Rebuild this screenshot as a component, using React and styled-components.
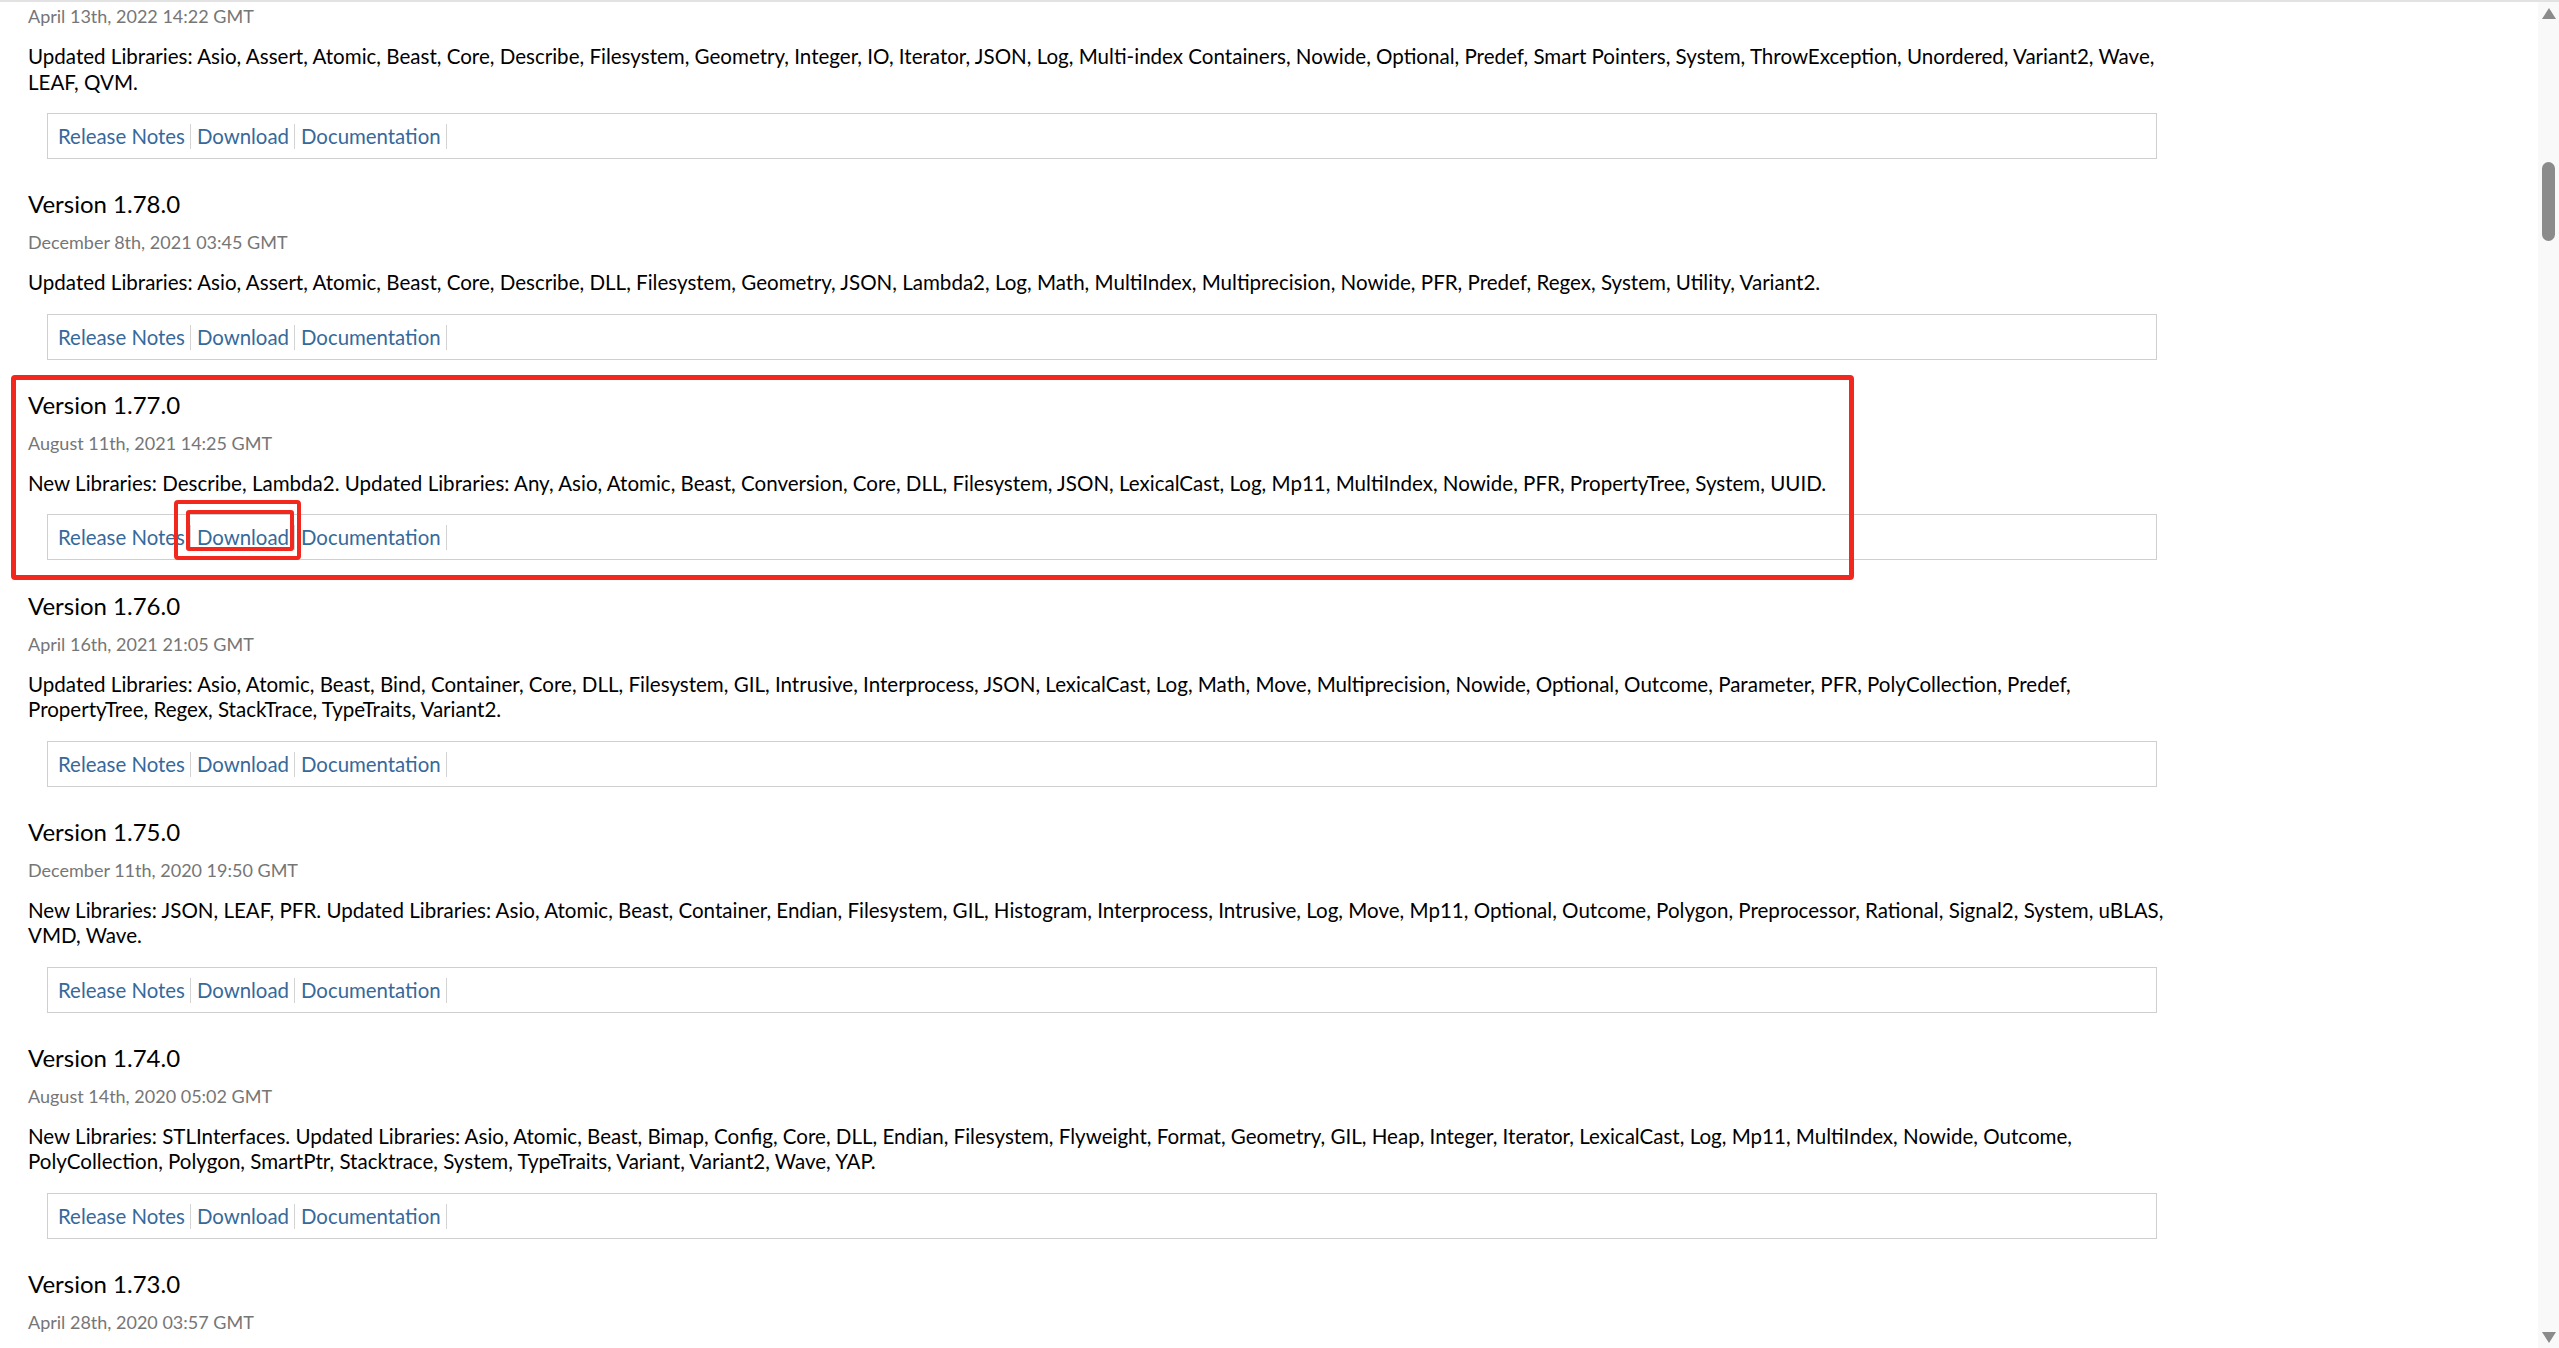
import React from "react"
import styled, { createGlobalStyle, css } from "styled-components"

const GlobalStyle = createGlobalStyle`
html, body {
	margin:0;
	padding:0;
	background:#fff;
	overflow:hidden;
}
body {
	font-family: Lato, "Noto Sans", "Liberation Sans", sans-serif;
	color:#000;
}
`

const releases = [
	{
		version: "1.79.0",
		date: "April 13th, 2022 14:22 GMT",
		lines: [
			"Updated Libraries: Asio, Assert, Atomic, Beast, Core, Describe, Filesystem, Geometry, Integer, IO, Iterator, JSON, Log, Multi-index Containers, Nowide, Optional, Predef, Smart Pointers, System, ThrowException, Unordered, Variant2, Wave,",
			"LEAF, QVM.",
		],
		hideTitle: true,
	},
	{
		version: "1.78.0",
		date: "December 8th, 2021 03:45 GMT",
		lines: [
			"Updated Libraries: Asio, Assert, Atomic, Beast, Core, Describe, DLL, Filesystem, Geometry, JSON, Lambda2, Log, Math, MultiIndex, Multiprecision, Nowide, PFR, Predef, Regex, System, Utility, Variant2.",
		],
	},
	{
		version: "1.77.0",
		date: "August 11th, 2021 14:25 GMT",
		lines: [
			"New Libraries: Describe, Lambda2. Updated Libraries: Any, Asio, Atomic, Beast, Conversion, Core, DLL, Filesystem, JSON, LexicalCast, Log, Mp11, MultiIndex, Nowide, PFR, PropertyTree, System, UUID.",
		],
		marked: true,
	},
	{
		version: "1.76.0",
		date: "April 16th, 2021 21:05 GMT",
		lines: [
			"Updated Libraries: Asio, Atomic, Beast, Bind, Container, Core, DLL, Filesystem, GIL, Intrusive, Interprocess, JSON, LexicalCast, Log, Math, Move, Multiprecision, Nowide, Optional, Outcome, Parameter, PFR, PolyCollection, Predef,",
			"PropertyTree, Regex, StackTrace, TypeTraits, Variant2.",
		],
	},
	{
		version: "1.75.0",
		date: "December 11th, 2020 19:50 GMT",
		lines: [
			"New Libraries: JSON, LEAF, PFR. Updated Libraries: Asio, Atomic, Beast, Container, Endian, Filesystem, GIL, Histogram, Interprocess, Intrusive, Log, Move, Mp11, Optional, Outcome, Polygon, Preprocessor, Rational, Signal2, System, uBLAS,",
			"VMD, Wave.",
		],
	},
	{
		version: "1.74.0",
		date: "August 14th, 2020 05:02 GMT",
		lines: [
			"New Libraries: STLInterfaces. Updated Libraries: Asio, Atomic, Beast, Bimap, Config, Core, DLL, Endian, Filesystem, Flyweight, Format, Geometry, GIL, Heap, Integer, Iterator, LexicalCast, Log, Mp11, MultiIndex, Nowide, Outcome,",
			"PolyCollection, Polygon, SmartPtr, Stacktrace, System, TypeTraits, Variant, Variant2, Wave, YAP.",
		],
	},
	{
		// only the title and date are still inside the window
		version: "1.73.0",
		date: "April 28th, 2020 03:57 GMT",
		lines: [],
		noLinks: true,
	},
]

const Page = styled.div`
height:100vh;
display:flex;
flex-direction:column;
overflow:hidden;
`

const TopEdge = styled.div`
flex:none;
height:2px;
background:#e2e2e2;
`

const Viewport = styled.div`
flex:1;
min-height:0;
display:flex;
`

const Content = styled.main`
flex:1;
min-width:0;
overflow:hidden;
padding-left:28px;
`

// scrolled down: top of the first release is above the window
const ReleaseList = styled.div`
width:2136px;
margin-top:-8px;
`

const Release = styled.section`
position:relative;
padding-bottom:29.2px;
${props => props.$marked && css`
	&::after{
		content:"";
		position:absolute;
		left:-17px;
		top:-14px;
		width:1843px;
		height:205px;
		box-sizing:border-box;
		border:5px solid #f2281e;
		border-radius:4px;
		pointer-events:none;
	}
`}
`

const Title = styled.h3`
margin:0;
font-size:24px;
font-weight:400;
line-height:32px;
color:#000;
`

const Date = styled.div`
margin-top:10px;
font-size:18px;
line-height:24px;
color:#767676;
`

const Notes = styled.p`
margin:16px 0 0;
font-size:20.55px;
line-height:25.5px;
color:#000;
`

const NoteLine = styled.span`
display:block;
white-space:nowrap;
`

const LinkBar = styled.div`
box-sizing:border-box;
margin:18px 7px 0 19px;
height:46px;
border:1px solid #cfcfcf;
padding:10px 4px 0;
display:flex;
align-items:flex-start;
`

const LinkItem = styled.a`
position:relative;
display:block;
padding:0 5px 0 6px;
height:25px;
line-height:25px;
font-size:20.4px;
color:#36699b;
text-decoration:none;
border-right:1px solid #d3d3d3;
cursor:pointer;
${props => props.$marked && css`
	&::before{
		content:"";
		position:absolute;
		left:-5px;
		right:0;
		top:-15px;
		bottom:-1px;
		border:4px solid #f2281e;
		border-radius:3px;
	}
	&::after{
		content:"";
		position:absolute;
		left:-17px;
		right:-7px;
		top:-25px;
		bottom:-10px;
		border:4px solid #f2281e;
		border-radius:4px;
	}
`}
`

const ScrollTrack = styled.div`
flex:none;
width:21px;
background:#f9f9f9;
display:flex;
flex-direction:column;
align-items:center;
`

const Arrow = styled.div`
width:0;
height:0;
border-left:7px solid transparent;
border-right:7px solid transparent;
${props => props.$down
	? css`border-top:11px solid #8b8b8b; margin-top:auto; margin-bottom:5px;`
	: css`border-bottom:11px solid #8b8b8b; margin-top:6px;`}
`

const Thumb = styled.div`
width:13px;
height:79px;
border-radius:7px;
background:#8b8b8b;
margin-top:143px;
`

const ReleaseBlock = ({release}) => {
	return(
		<Release $marked={release.marked}>
			{!release.hideTitle && <Title>Version {release.version}</Title>}
			<Date>{release.date}</Date>
			{release.lines.length > 0 && (
				<Notes>
					{release.lines.map((line,index)=>(
						<NoteLine key={index}>{line}</NoteLine>
					))}
				</Notes>
			)}
			{!release.noLinks && (
				<LinkBar>
					<LinkItem>Release Notes</LinkItem>
					<LinkItem $marked={release.marked}>Download</LinkItem>
					<LinkItem>Documentation</LinkItem>
				</LinkBar>
			)}
		</Release>
	)
}

const App = () => {
	return(
		<Page>
			<GlobalStyle/>
			<TopEdge/>
			<Viewport>
				<Content>
					<ReleaseList>
						{releases.map(release=>(
							<ReleaseBlock key={release.version} release={release}/>
						))}
					</ReleaseList>
				</Content>
				<ScrollTrack>
					<Arrow/>
					<Thumb/>
					<Arrow $down/>
				</ScrollTrack>
			</Viewport>
		</Page>
	)
}

export default App
